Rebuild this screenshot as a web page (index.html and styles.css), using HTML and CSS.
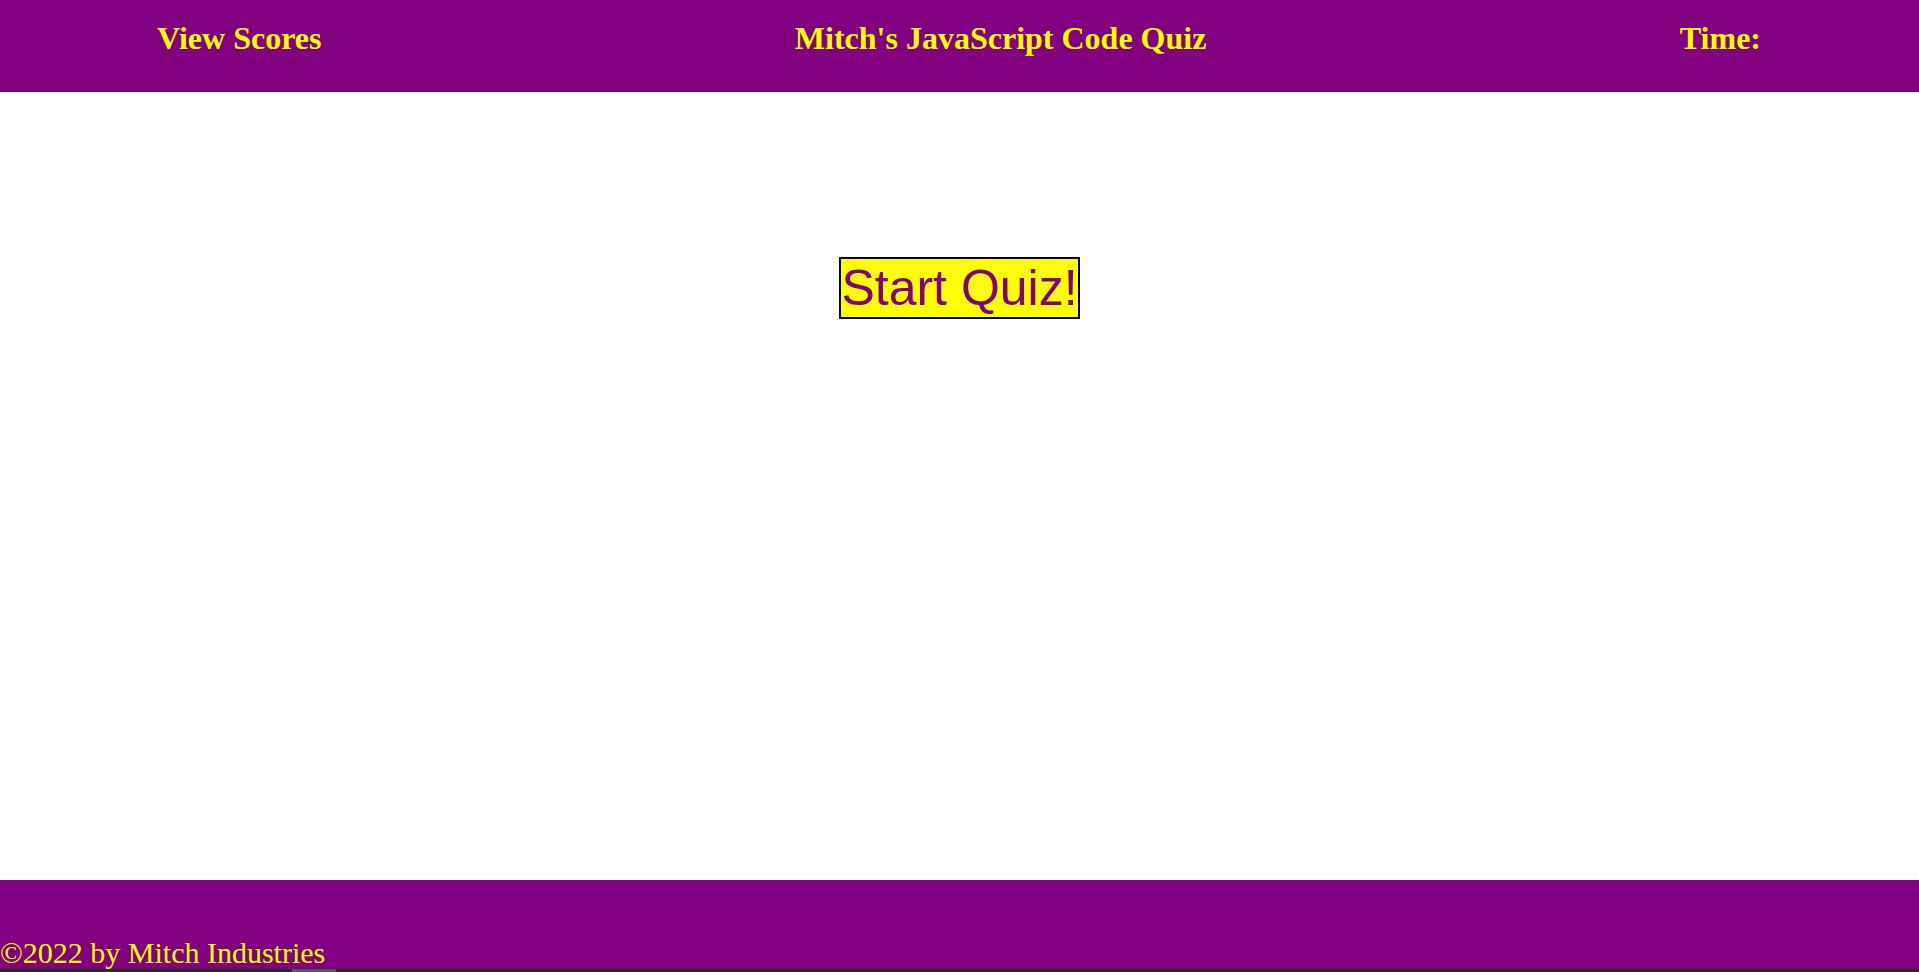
FILE: index.html
```html
<!DOCTYPE html>
<html lang="en">
<head>
<meta charset="utf-8">
<title>Mitch's JavaScript Code Quiz</title>
<link rel="stylesheet" href="styles.css">
</head>
<body>
<div class="page">
  <header class="topbar">
    <div class="nav-item">View Scores</div>
    <div class="nav-item">Mitch's JavaScript Code Quiz</div>
    <div class="nav-item">Time:</div>
  </header>
  <main class="content">
    <button class="start-btn" type="button">Start Quiz!</button>
  </main>
  <footer class="footer">
    <p class="copy">©2022 by Mitch Industries</p>
  </footer>
  <div class="strip"><span class="strip-thumb"></span></div>
</div>
</body>
</html>
```

FILE: styles.css
```css
html, body {
  margin: 0;
  padding: 0;
  height: 100%;
}

body {
  font-family: "Liberation Serif", "Times New Roman", serif;
  background: #ffffff;
  overflow: hidden;
}

.page {
  display: flex;
  flex-direction: column;
  height: 972px;
}

.topbar {
  height: 92px;
  flex: 0 0 92px;
  box-sizing: border-box;
  background: #800080;
  display: flex;
  justify-content: space-between;
  align-items: flex-start;
  padding: 20px 158px 0 157px;
}

.nav-item {
  color: #ffff00;
  font-weight: bold;
  font-size: 32px;
  line-height: 37px;
  white-space: nowrap;
}

.content {
  flex: 1 1 auto;
  display: flex;
  justify-content: center;
  align-items: flex-start;
  padding-top: 165px;
}

.start-btn {
  font-family: "Liberation Sans", Arial, sans-serif;
  font-size: 50px;
  line-height: 58px;
  color: #800080;
  background: #ffff00;
  border: 2px solid #000000;
  padding: 0;
  margin: 0;
  cursor: pointer;
}

.footer {
  flex: 0 0 89px;
  height: 89px;
  background: #800080;
  display: flex;
  align-items: flex-end;
}

.copy {
  margin: 0;
  color: #ffff00;
  font-size: 30px;
  line-height: 34px;
  white-space: nowrap;
  position: relative;
  top: 1px;
}

.strip {
  flex: 0 0 3px;
  height: 3px;
  background: #2a2a2a;
  display: flex;
}

.strip-thumb {
  margin-left: 292px;
  width: 44px;
  height: 3px;
  background: #5a5a5a;
}
```
